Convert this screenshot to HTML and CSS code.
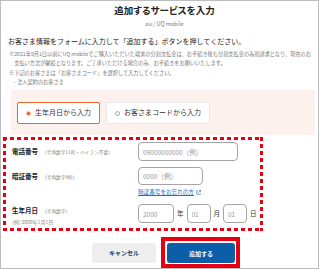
FILE: index.html
```html
<!DOCTYPE html>
<html lang="ja">

<head>
    <meta charset="UTF-8">
    <title>追加するサービスを入力</title>
    <link rel="stylesheet" href="styles.css">
</head>

<body>
    <div class="frame">
        <div class="content">
            <div class="header">
                <h1 class="title">追加するサービスを入力</h1>
                <p class="brand">au / UQ mobile</p>
            </div>
            <p class="lead">お客さま情報をフォームに入力して「追加する」ボタンを押してください。</p>
            <p class="note first">※2021年9月1日以前にUQ mobileでご購入いただいた端末の分割支払金は、お手続き後も分割支払金のみ別請求となり、現在のお支払い方法が継続となります。ご了承いただける場合のみ、お手続きをお願いいたします。</p>
            <p class="note">※下記のお客さまは「お客さまコード」を選択して入力してください。<br>- 法人契約のお客さま</p>

            <!-- Input method tabs -->
            <div class="method">
                <label class="choice selected"><span class="dot"></span>生年月日から入力</label>
                <label class="choice"><span class="dot"></span>お客さまコードから入力</label>
            </div>

            <!-- Highlighted form fields -->
            <div class="form-area">
                <div class="row">
                    <div class="label"><b>電話番号</b><small>（半角数字11桁・ハイフン不要）</small></div>
                    <input class="field phone" placeholder="09000000000（例）">
                </div>
                <div class="row">
                    <div class="label"><b>暗証番号</b><small>（半角数字4桁）</small></div>
                    <input class="field pin" placeholder="0000（例）">
                </div>
                <div class="forgot">
                    <a href="#">暗証番号をお忘れの方</a>
                    <svg class="ext" width="5" height="5" viewBox="0 0 10 10">
                        <path d="M4 1.5H1.5v7h7V6" fill="none" stroke="#1d6fbf" stroke-width="1.2"/>
                        <path d="M6 1h3v3M9 1L4.5 5.5" fill="none" stroke="#1d6fbf" stroke-width="1.2"/>
                    </svg>
                </div>
                <div class="row birth">
                    <div class="label">
                        <b>生年月日</b><small>（半角数字）</small>
                        <div class="example">(例) 2000年1月1日</div>
                    </div>
                    <div class="date">
                        <input class="field year" placeholder="2000">
                        <span class="unit">年</span>
                        <input class="field short" placeholder="01">
                        <span class="unit">月</span>
                        <input class="field short" placeholder="01">
                        <span class="unit">日</span>
                    </div>
                </div>
            </div>
        </div>

        <div class="actions">
            <button class="btn cancel">キャンセル</button>
            <span class="mark"><button class="btn submit">追加する</button></span>
        </div>
    </div>
</body>

</html>
```

FILE: styles.css
```css
body {
    margin: 0;
    font-family: "Noto Sans CJK JP", "Noto Sans", sans-serif;
    color: #333;
    background-color: #fff;
}

.frame {
    width: 319px;
    height: 269px;
    box-sizing: border-box;
    border: 1px solid #bdbdbd;
    overflow: hidden;
    font-size: 6px;
    line-height: 1.3;
}

.content {
    padding: 0 2px 0 7px;
}

.header {
    padding-left: 5px;
    text-align: center;
}

.title {
    margin: 3px 0 0;
    font-size: 9.5px;
    line-height: 12px;
    font-weight: bold;
    font-feature-settings: "palt";
    color: #222;
}

.brand {
    margin: 4px 0 0;
    font-size: 5.5px;
    line-height: 8px;
    color: #777;
}

.lead {
    margin: 8px 0 0;
    font-size: 7px;
    line-height: 10px;
    color: #222;
}

.note {
    margin: 1px 0 0 1px;
    padding-left: 1em;
    text-indent: -1em;
    font-size: 5.2px;
    line-height: 9px;
    color: #777;
}

.note.first {
    margin-top: 2.5px;
}
/* Tabs */

.method {
    display: flex;
    gap: 6px;
    margin: 4.5px 1px 0 3px;
    padding: 12px 6px 11px;
    background-color: #fdf1ed;
}

.choice {
    display: flex;
    align-items: center;
    gap: 4px;
    height: 22px;
    box-sizing: border-box;
    padding: 0 8px;
    background-color: #fff;
    border: 1px solid #e8e8e8;
    border-radius: 2px;
    font-size: 7px;
    color: #333;
}

.choice.selected {
    border-color: #e8692b;
}

.dot {
    width: 5px;
    height: 5px;
    box-sizing: border-box;
    border: 1px solid #aaa;
    border-radius: 50%;
}

.selected .dot {
    border-color: #f7c6b2;
    background-color: #e9582b;
}
/* Form block with the square dotted frame */

.form-area {
    width: 260px;
    box-sizing: border-box;
    margin: 2px 0 0 -5px;
    padding: 5px 0 5px 9px;
    background-image: linear-gradient(to right, #e60012 4px, transparent 4px), linear-gradient(to right, #e60012 4px, transparent 4px), linear-gradient(to bottom, #e60012 4px, transparent 4px), linear-gradient(to bottom, #e60012 4px, transparent 4px);
    background-size: 7px 3px, 7px 3px, 3px 7px, 3px 7px;
    background-position: 0 0, 0 100%, 0 0, 100% 0;
    background-repeat: repeat-x, repeat-x, repeat-y, repeat-y;
}

.row {
    display: flex;
    align-items: center;
}

.row + .row {
    margin-top: 6px;
}

.label {
    flex: none;
    width: 126px;
    line-height: 10px;
}

.label b {
    font-size: 6.5px;
    color: #222;
}

.label small {
    margin-left: 4px;
    font-size: 4.7px;
    color: #888;
}

.field {
    display: block;
    height: 19px;
    box-sizing: border-box;
    padding: 0 4px;
    border: 1px solid #a5a5a5;
    border-radius: 4px;
    font-family: inherit;
    font-size: 6.5px;
    outline: none;
}

.field::placeholder {
    color: #999;
}

.phone {
    width: 100px;
}

.pin {
    width: 65px;
    height: 18px;
}

.forgot {
    display: flex;
    align-items: center;
    gap: 2px;
    margin-top: 3px;
    padding-left: 126px;
    font-size: 5.6px;
    line-height: 8px;
}

.forgot a {
    color: #1d6fbf;
}

.row.birth {
    align-items: flex-start;
    margin-top: 8px;
}

.birth .label {
    padding-top: 1px;
}

.example {
    margin-top: 2px;
    font-size: 5px;
    line-height: 8px;
    color: #888;
}

.date {
    display: flex;
    align-items: center;
    gap: 3px;
}

.year {
    width: 36px;
}

.short {
    width: 24px;
}

.unit {
    font-size: 6.5px;
    color: #333;
}
/* Buttons */

.actions {
    display: flex;
    align-items: center;
    gap: 5px;
    margin-top: 6px;
    padding-left: 91px;
}

.btn {
    height: 20px;
    border: none;
    border-radius: 3px;
    font-family: inherit;
    font-size: 6px;
    font-weight: bold;
    cursor: pointer;
}

.cancel {
    width: 64px;
    background-color: #eee;
    color: #213f70;
}

.mark {
    display: flex;
    padding: 2px 1px 1px 2px;
    border: 4px solid #e60012;
}

.submit {
    width: 68px;
    background-color: #0c5ea9;
    color: #fff;
}
```
